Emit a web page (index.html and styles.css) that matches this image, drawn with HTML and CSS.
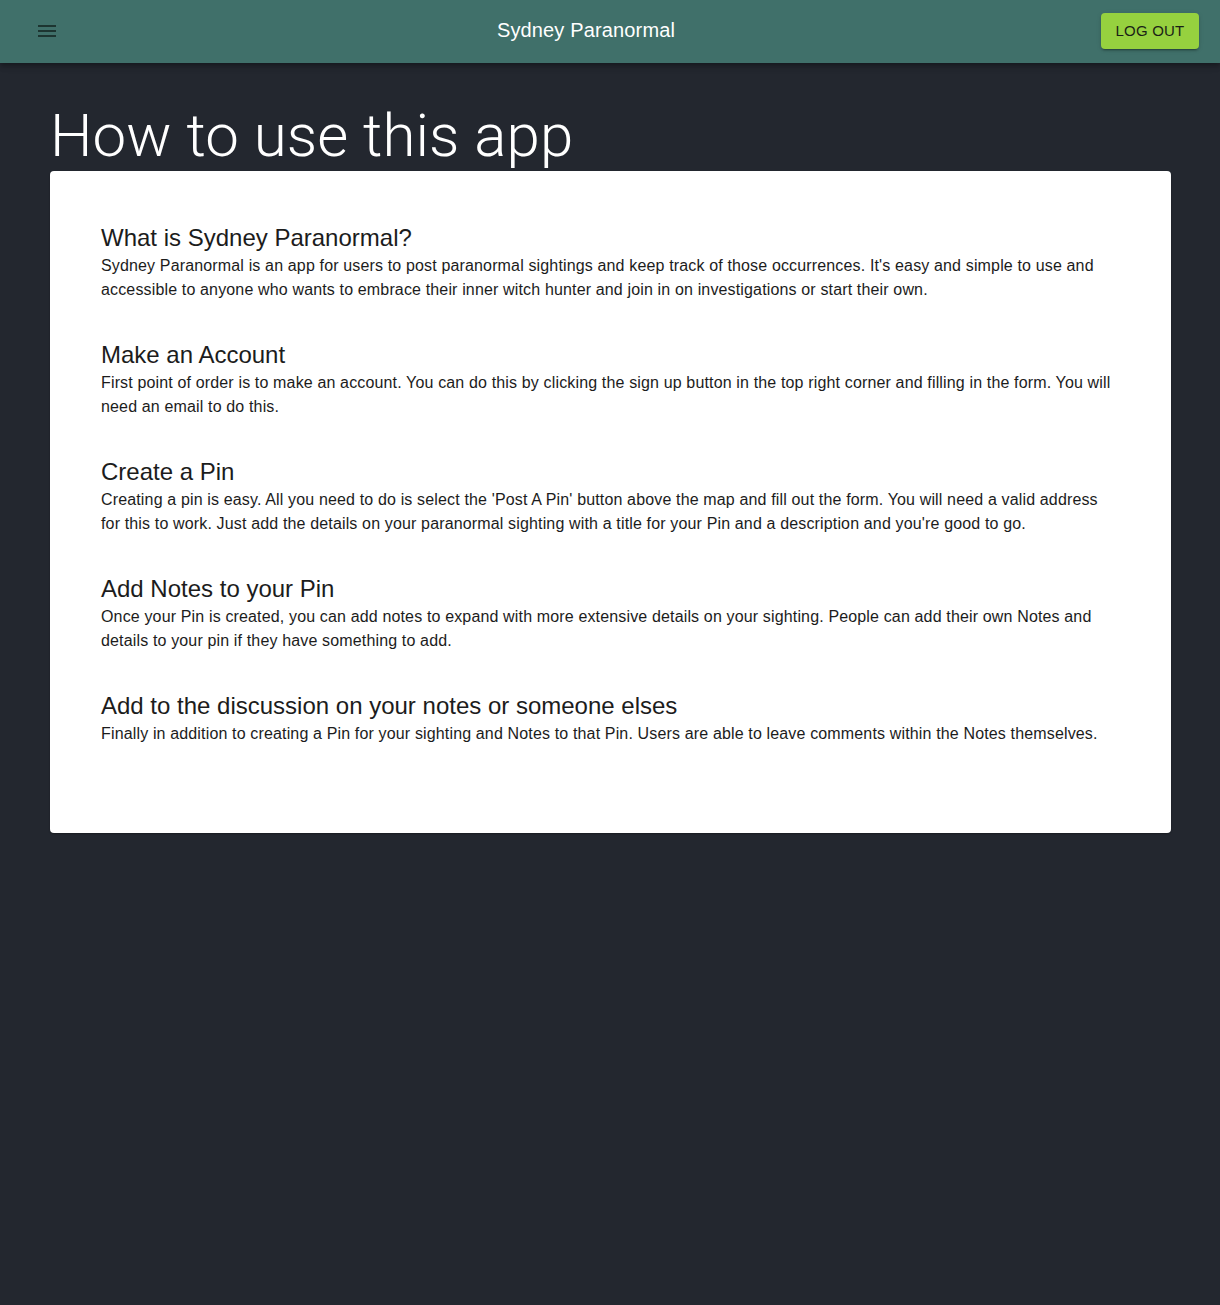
FILE: index.html
```html
<!DOCTYPE html>
<html lang="en">
<head>
<meta charset="utf-8">
<title>Sydney Paranormal</title>
<link rel="stylesheet" href="styles.css">
</head>
<body>
<header class="appbar">
  <button class="menu-btn" aria-label="menu">
    <svg width="18" height="12" viewBox="0 0 18 12"><path d="M0 0h18v2H0zM0 5h18v2H0zM0 10h18v2H0z" fill="#1d3531"/></svg>
  </button>
  <div class="brand">Sydney Paranormal</div>
  <button class="logout">LOG OUT</button>
</header>
<main class="page">
  <h1 class="page-title">How to use this app</h1>
  <section class="card">
    <div class="item">
      <h2>What is Sydney Paranormal?</h2>
      <p>Sydney Paranormal is an app for users to post paranormal sightings and keep track of those occurrences. It's easy and simple to use and accessible to anyone who wants to embrace their inner witch hunter and join in on investigations or start their own.</p>
    </div>
    <div class="item">
      <h2>Make an Account</h2>
      <p>First point of order is to make an account. You can do this by clicking the sign up button in the top right corner and filling in the form. You will need an email to do this.</p>
    </div>
    <div class="item">
      <h2>Create a Pin</h2>
      <p>Creating a pin is easy. All you need to do is select the 'Post A Pin' button above the map and fill out the form. You will need a valid address for this to work. Just add the details on your paranormal sighting with a title for your Pin and a description and you're good to go.</p>
    </div>
    <div class="item">
      <h2>Add Notes to your Pin</h2>
      <p>Once your Pin is created, you can add notes to expand with more extensive details on your sighting. People can add their own Notes and details to your pin if they have something to add.</p>
    </div>
    <div class="item">
      <h2>Add to the discussion on your notes or someone elses</h2>
      <p>Finally in addition to creating a Pin for your sighting and Notes to that Pin. Users are able to leave comments within the Notes themselves.</p>
    </div>
  </section>
</main>
</body>
</html>
```
FILE: styles.css
```css
* { box-sizing: border-box; }
html, body {
  margin: 0;
  padding: 0;
  background: #23272f;
  font-family: "Liberation Sans", Arial, Helvetica, sans-serif;
}
body { min-height: 1305px; }
.appbar {
  height: 63px;
  background: #40706a;
  display: flex;
  align-items: center;
  justify-content: space-between;
  padding: 0 21px 2px 26px;
  box-shadow: 0 2px 4px -1px rgba(0,0,0,0.2), 0 4px 5px 0 rgba(0,0,0,0.14), 0 1px 10px 0 rgba(0,0,0,0.12);
  position: relative;
  z-index: 1;
}
.menu-btn {
  width: 42px;
  height: 42px;
  border: none;
  background: transparent;
  padding: 0;
  display: flex;
  align-items: center;
  justify-content: center;
}
.brand {
  color: #ffffff;
  font-size: 20px;
  letter-spacing: 0.15px;
  position: absolute;
  left: 0;
  right: 48px;
  top: 19px;
  line-height: 23px;
  text-align: center;
  pointer-events: none;
}
.logout {
  background: #96d13f;
  color: #1a1f16;
  border: none;
  border-radius: 4px;
  height: 36px;
  width: 98px;
  font-family: "Liberation Sans", Arial, sans-serif;
  font-size: 15px;
  letter-spacing: 0.2px;
  box-shadow: 0 3px 1px -2px rgba(0,0,0,0.2), 0 2px 2px 0 rgba(0,0,0,0.14), 0 1px 5px 0 rgba(0,0,0,0.12);
}
.page {
  padding: 0 49px 40px 50px;
}
.page-title {
  margin: 0;
  padding-top: 37px;
  color: #ffffff;
  font-family: Roboto, "Liberation Sans", sans-serif;
  font-size: 60px;
  font-weight: 300;
  line-height: 71px;
  letter-spacing: 0.1px;
}
.card {
  background: #ffffff;
  border-radius: 4px;
  padding: 52px 51px 49px;
  color: #1c1c1c;
  box-shadow: 0 1px 2px rgba(0,0,0,0.3);
}
.item { margin-bottom: 38px; }
.item h2 {
  margin: 0 0 2px;
  font-size: 24px;
  font-weight: 400;
  line-height: 29px;
}
.item p {
  margin: 0;
  font-size: 16px;
  line-height: 24px;
  letter-spacing: 0.15px;
}
```
